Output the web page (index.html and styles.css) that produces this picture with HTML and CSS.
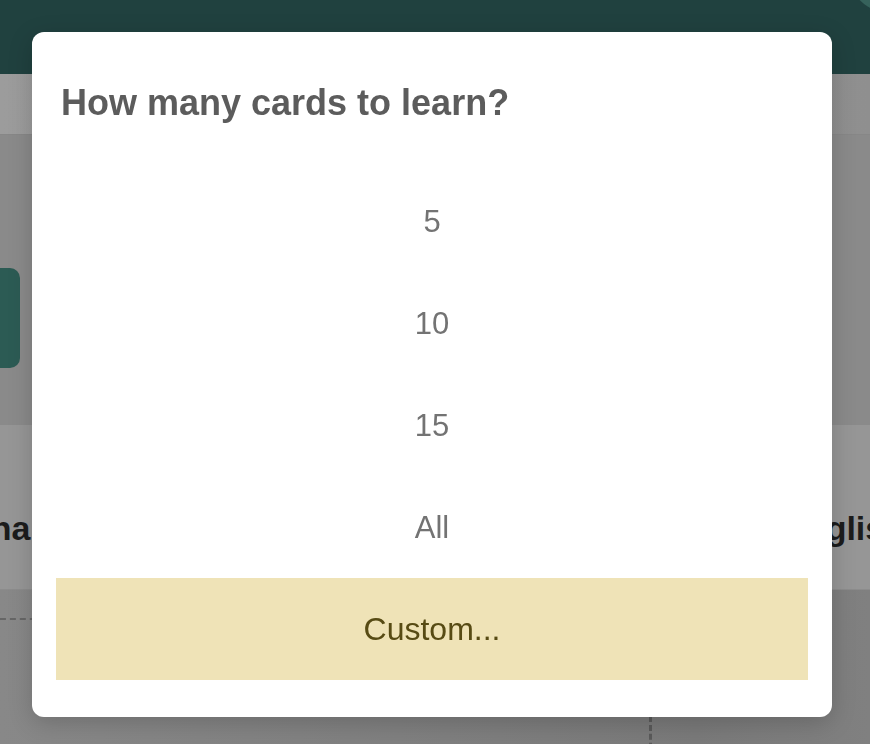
FILE: index.html
```html
<!DOCTYPE html>
<html lang="en">
<head>
    <meta charset="UTF-8">
    <meta name="viewport" content="width=device-width, initial-scale=1.0">
    <title>Learn</title>
    <link rel="stylesheet" href="styles.css">
</head>
<body>

<div id="app">
    <header class="topbar"></header>
    <div class="toolbar"></div>
    <section class="deck">
        <div class="deck-button"></div>
    </section>
    <section class="langs">
        <span class="lang lang-from">Hiragana</span>
        <span class="lang lang-to">English</span>
    </section>
    <section class="board">
        <div class="board-frame"></div>
    </section>
</div>

<div class="overlay">
    <div class="dialog">
        <h2 class="dialog-title">How many cards to learn?</h2>
        <div class="options">
            <button class="option" onclick="pick(5)">5</button>
            <button class="option" onclick="pick(10)">10</button>
            <button class="option" onclick="pick(15)">15</button>
            <button class="option" onclick="pick('all')">All</button>
            <button class="option custom" onclick="pick('custom')">Custom...</button>
        </div>
    </div>
</div>

<script>
    function pick(count) {
        document.querySelector('.overlay').dataset.picked = count;
    }
</script>

</body>
</html>
```

FILE: styles.css
```css
* {
    box-sizing: border-box;
}

body {
    font-family: 'Liberation Sans', Arial, sans-serif;
    margin: 0;
    height: 100vh;
    overflow: hidden;
    background-color: #858585;
}

/* Page behind the dialog (already dimmed) */
#app {
    display: flex;
    flex-direction: column;
    height: 100vh;
}

.topbar {
    height: 74px;
    flex-shrink: 0;
    background: radial-gradient(circle at 892px -32px, #36625b 45px, transparent 46px), #20413f;
}

.toolbar {
    height: 61px;
    flex-shrink: 0;
    background: linear-gradient(to right, #9c9c9c, #8f8f8f);
    border-bottom: 1px solid #878787;
}

.deck {
    height: 290px;
    flex-shrink: 0;
    padding-top: 133px;
    background-color: #8a8a8a;
}

.deck-button {
    width: 100px;
    height: 100px;
    margin-left: -80px;
    border-radius: 10px;
    background-color: #2c5b54;
}

.langs {
    height: 165px;
    flex-shrink: 0;
    display: flex;
    align-items: center;
    justify-content: space-between;
    background-color: #969696;
    border-bottom: 1px solid #8c8c8c;
}

.lang {
    font-size: 34px;
    font-weight: bold;
    color: #1c1c1c;
    padding-top: 42px;
}

.lang-from {
    margin-left: -115px;
}

.lang-to {
    margin-right: -35px;
}

.board {
    flex: 1;
    padding-top: 28px;
    background: linear-gradient(to right, #888888, #7a7a7a 80%, #808080);
    overflow: hidden;
}

.board-frame {
    width: 662px;
    height: 300px;
    margin-left: -10px;
    border-top: 2px dashed #666;
    border-right: 3px dashed #5a5a5a;
}

/* Dialog */
.overlay {
    position: fixed;
    top: 0;
    left: 0;
    right: 0;
    bottom: 0;
    padding: 32px 38px 27px 32px;
}

.dialog {
    width: 800px;
    height: 685px;
    padding: 53px 24px 36px;
    border-radius: 12px;
    background-color: #fff;
    box-shadow: 0 6px 24px rgba(0, 0, 0, 0.18);
}

.dialog-title {
    margin: 0 0 0 5px;
    font-size: 36px;
    line-height: 36px;
    font-weight: bold;
    color: #5c5c5c;
}

.options {
    display: flex;
    flex-direction: column;
    margin-top: 50px;
}

.option {
    height: 102px;
    border: none;
    background: none;
    font-family: inherit;
    font-size: 31px;
    color: #737373;
    cursor: pointer;
}

.option.custom {
    margin-top: -1px;
    background-color: #efe3b7;
    color: #574b14;
    font-size: 32px;
}
```
